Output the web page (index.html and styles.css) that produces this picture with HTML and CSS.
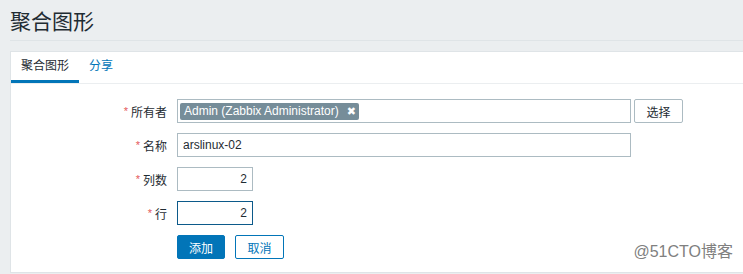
FILE: index.html
```html
<!DOCTYPE html>
<html>
<head>
    <link rel="stylesheet" href="styles.css">
</head>
<body>
    <!-- Page header -->
    <header class="header">
        <h1 class="header-title">聚合图形</h1>
    </header>

    <!-- Form panel -->
    <div class="panel">
        <ul class="tabs">
            <li class="tab active">聚合图形</li>
            <li class="tab">分享</li>
        </ul>

        <form class="form">
            <label class="form-label"><span class="asterisk">*</span>所有者</label>
            <div class="form-field">
                <div class="multiselect">
                    <span class="tag">Admin (Zabbix Administrator)<span class="tag-remove">&#x2716;</span></span>
                </div>
                <button type="button" class="btn-alt">选择</button>
            </div>

            <label class="form-label"><span class="asterisk">*</span>名称</label>
            <div class="form-field">
                <input class="input input-wide" type="text" value="arslinux-02">
            </div>

            <label class="form-label"><span class="asterisk">*</span>列数</label>
            <div class="form-field">
                <input class="input input-num" type="text" value="2">
            </div>

            <label class="form-label"><span class="asterisk">*</span>行</label>
            <div class="form-field">
                <input class="input input-num focused" type="text" value="2">
            </div>

            <div></div>
            <div class="form-field buttons">
                <button type="button" class="btn-primary">添加</button>
                <button type="button" class="btn-secondary">取消</button>
            </div>
        </form>
    </div>

    <div class="watermark">@51CTO博客</div>
</body>
</html>
```

FILE: styles.css
```css
body {
    margin: 0;
    background: #ebeef0;
    color: #1f2c33;
    font-family: "Liberation Sans", Arial, "Noto Sans CJK SC", sans-serif;
    font-size: 12px;
    position: relative;
    min-height: 274px;
    overflow: hidden;
}
.header {
    margin: 0 0 0 10px;
    height: 40px;
    border-bottom: 1px solid #dfe4e7;
}
.header-title {
    margin: 0;
    font-size: 21px;
    font-weight: normal;
    line-height: 44px;
}
.panel {
    margin: 10px 0 0 10px;
    background: #fff;
    border: 1px solid #dfe4e7;
    border-right: 0;
    padding-bottom: 13px;
}
.tabs {
    display: flex;
    margin: 0;
    padding: 0;
    list-style: none;
    border-bottom: 1px solid #ebeef0;
}
.tab {
    padding: 0 10px;
    line-height: 28px;
    border-bottom: 3px solid transparent;
    color: #0275b8;
}
.tab.active {
    color: #1f2c33;
    border-bottom-color: #0275b8;
}
.form {
    display: grid;
    grid-template-columns: 156px auto;
    column-gap: 10px;
    row-gap: 10px;
    padding-top: 15px;
}
.form-label {
    display: flex;
    align-items: center;
    justify-content: flex-end;
    height: 24px;
}
.asterisk {
    color: #e45959;
    margin-right: 3px;
    font-size: 11px;
}
.form-field {
    display: flex;
    align-items: center;
    height: 24px;
}
.multiselect {
    box-sizing: border-box;
    width: 454px;
    height: 24px;
    border: 1px solid #acbbc2;
    padding: 3px 2px;
    display: flex;
    align-items: center;
}
.tag {
    display: inline-flex;
    align-items: center;
    height: 17px;
    background: #768d99;
    color: #fff;
    padding: 0 3px 0 4px;
    border-radius: 2px;
}
.tag-remove {
    margin-left: 8px;
    font-size: 11px;
    font-weight: bold;
    font-family: "DejaVu Sans", sans-serif;
}
.input {
    box-sizing: border-box;
    height: 24px;
    border: 1px solid #acbbc2;
    padding: 0 5px;
    font: inherit;
    color: #1f2c33;
    outline: none;
}
.input-wide {
    width: 454px;
}
.input-num {
    width: 76px;
    text-align: right;
}
.input.focused {
    border-color: #0c5a8a;
}
button {
    box-sizing: border-box;
    height: 24px;
    font: inherit;
    border-radius: 2px;
    padding: 0 11px;
    cursor: pointer;
}
.btn-alt {
    margin-left: 3px;
    width: 49px;
    background: #fff;
    border: 1px solid #acbbc2;
    color: #1f2c33;
}
.btn-primary {
    width: 48px;
    background: #0275b8;
    border: 1px solid #0275b8;
    color: #fff;
}
.btn-secondary {
    width: 49px;
    background: #fff;
    border: 1px solid #0275b8;
    color: #0275b8;
}
.buttons {
    gap: 10px;
}
.watermark {
    position: absolute;
    right: 10px;
    bottom: 12px;
    font-size: 16px;
    color: #808080;
    font-family: "Liberation Sans", "Noto Sans CJK SC", sans-serif;
}
```
